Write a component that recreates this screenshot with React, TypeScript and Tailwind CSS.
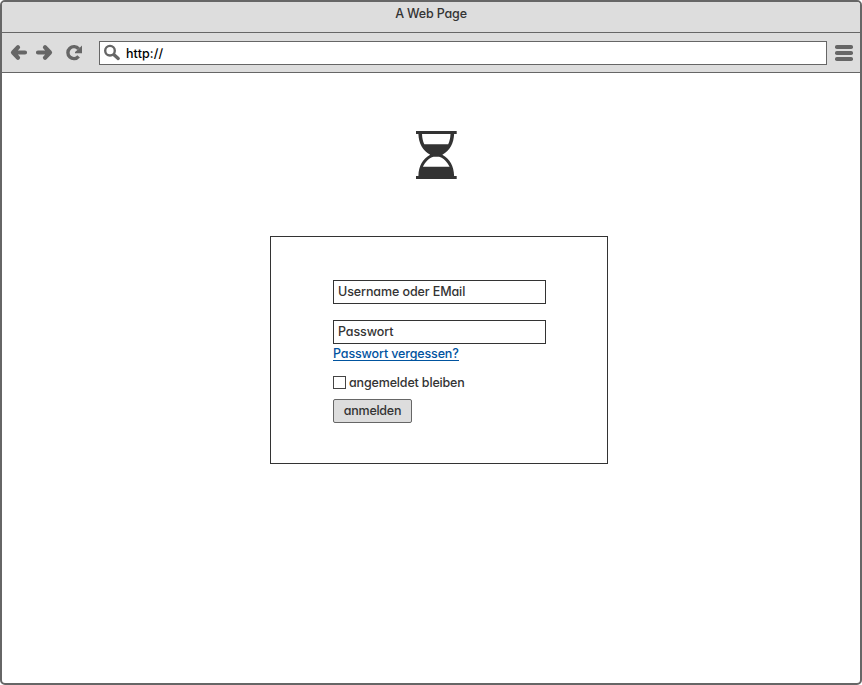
import type { ReactNode } from "react";

function Label({ children, className = "" }: { children: ReactNode; className?: string }) {
  return (
    <span className={`block whitespace-nowrap text-[12.5px] leading-4 font-medium [font-feature-settings:'cv11'] ${className}`}>
      {children}
    </span>
  );
}

function TitleBar() {
  return (
    <header className="flex h-[31px] justify-center border-b border-[#666] bg-[#ddd] pt-1">
      <Label className="tracking-[-0.16px]">A Web Page</Label>
    </header>
  );
}

function Toolbar() {
  return (
    <nav className="flex h-10 items-start border-b border-[#666] bg-[#ddd] text-[#666]">
      <svg className="mt-2 h-6 w-[97px] shrink-0" viewBox="2 41 97 24" fill="none" stroke="currentColor">
        <g strokeWidth="4.2" strokeLinecap="round" strokeLinejoin="round">
          <path d="M18 47.2 L13 52.5 L18 57.8 M14 52.5 H25" />
          <path d="M45 47.2 L50 52.5 L45 57.8 M49 52.5 H38" />
        </g>
        <path d="M78.6 48.9 A6 6 0 1 0 78.6 56.4" strokeWidth="3.4" />
        <path d="M82 45.5 V53.3 H75 V52 L78 49.5 Z" fill="currentColor" stroke="none" />
      </svg>
      <div className="mt-2 flex h-6 w-[728px] items-start border border-[#666] bg-white">
        <svg className="h-[22px] w-[26px] shrink-0" viewBox="100 42 26 22" fill="none" stroke="currentColor">
          <circle cx="110" cy="50.7" r="4.8" strokeWidth="2.4" />
          <path d="M114 54.8 L118.2 58.5" strokeWidth="3.4" strokeLinecap="round" />
        </svg>
        <Label className="pt-1 tracking-[0.1px] text-black">http://</Label>
      </div>
      <svg className="ml-2 mt-3 h-[17px] w-[18px]" viewBox="0 0 18 17" fill="currentColor">
        <rect y="0" width="18" height="4" rx="1.8" />
        <rect y="6" width="18" height="4" rx="1.8" />
        <rect y="12" width="18" height="4" rx="1.8" />
      </svg>
    </nav>
  );
}

function Hourglass() {
  return (
    <svg className="ml-[413px] mt-[57px] h-[50px] w-[42px] shrink-0" viewBox="415 130 42 50">
      <path
        fill="#333"
        fillRule="evenodd"
        d="M416 131 H456.7 V134 H454.1 C453.8 143 450 150.5 442.3 154.8 C450 159 453.8 166 454.1 176 H456.7 V179 H416 V176 H418.4 C418.7 166 422.5 159 430.2 154.8 C422.5 150.5 418.7 143 418.4 134 H416 Z M422 134 C422.2 138 422.9 141.5 424.3 144.3 H448.2 C449.6 141.5 450.3 138 450.5 134 Z M422.9 166.8 H449.6 C447.2 161.8 443.2 157.8 439 156.8 H433.5 C429.3 157.8 425.3 161.8 422.9 166.8 Z"
      />
    </svg>
  );
}

function Field({ text, className = "" }: { text: string; className?: string }) {
  return (
    <div className={`h-6 w-[213px] border border-[#333] pl-1 pt-[3px] ${className}`}>
      <Label className="tracking-[-0.1px]">{text}</Label>
    </div>
  );
}

function LoginForm() {
  return (
    <main className="ml-[268px] mt-14 flex h-[228px] w-[338px] flex-col items-start border border-[#333] pl-[62px] pt-[43px]">
      <Field text="Username oder EMail" />
      <Field text="Passwort" className="mt-4" />
      <a className="h-[17px] w-[126px] border-b border-[#00539f] pt-[2px] text-[#00539f]">
        <Label className="tracking-[-0.14px]">Passwort vergessen?</Label>
      </a>
      <div className="mt-[13px] flex h-4 items-start">
        <span className="mt-[2px] h-[13px] w-[13px] border border-[#444]" />
        <Label className="ml-[3px] mt-px tracking-[-0.16px]">angemeldet bleiben</Label>
      </div>
      <button className="mt-[9px] flex h-6 w-[79px] justify-center rounded-[2px] border border-[#666] bg-[#ddd] pt-[3px]">
        <Label className="tracking-[-0.25px]">anmelden</Label>
      </button>
    </main>
  );
}

export default function App() {
  return (
    <div className="h-[685px] w-[862px] bg-white font-['Inter','Open_Sans',sans-serif] text-[#333]">
      <div className="flex h-full w-full flex-col overflow-hidden rounded-[5px] border-2 border-[#666]">
        <TitleBar />
        <Toolbar />
        <Hourglass />
        <LoginForm />
      </div>
    </div>
  );
}
